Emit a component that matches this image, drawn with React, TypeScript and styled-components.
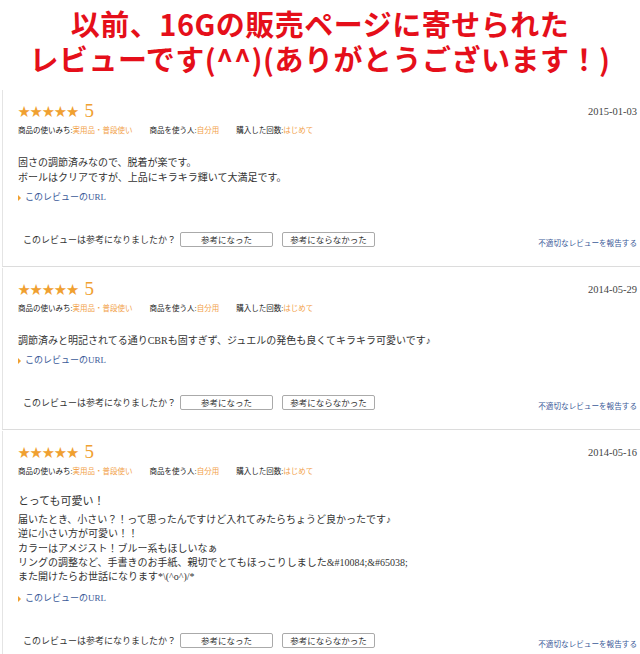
import React from "react";
import styled, { createGlobalStyle } from "styled-components";

const Global = createGlobalStyle`
  html, body { margin: 0; padding: 0; background: #fff; }
  body { font-family: "Liberation Serif", "Noto Sans CJK JP", serif; color: #333; }
`;

const Page = styled.div`
  width: 640px;
  display: flex;
  flex-direction: column;
`;

const Title = styled.h1`
  margin: 0;
  padding: 6px 0 14px;
  display: flex;
  flex-direction: column;
  align-items: center;
  font-family: "Noto Sans CJK JP", sans-serif;
  font-weight: 700;
  font-size: 29px;
  line-height: 35px;
  letter-spacing: 0.5px;
  color: #e50f1a;
`;

const TitleLine = styled.span`
  display: block;
  white-space: nowrap;
`;

const Card = styled.section`
  display: flex;
  flex-direction: column;
  margin-left: 2px;
  margin-bottom: 1px;
  padding: 12px 3px 0 15px;
  border-left: 1px solid #e4e4e4;
  border-bottom: 1px solid #dcdcdc;
`;

const Header = styled.div`
  display: flex;
  align-items: center;
  justify-content: space-between;
  height: 18px;
`;

const Rating = styled.div`
  display: flex;
  align-items: center;
  gap: 6px;
  color: #f0a030;
`;

const Stars = styled.span`
  font-family: "Noto Sans CJK JP", sans-serif;
  font-size: 12.3px;
  letter-spacing: -0.2px;
  line-height: 18px;
`;

const Score = styled.span`
  font-family: "Liberation Serif", serif;
  font-size: 19px;
  line-height: 18px;
`;

const DateText = styled.span`
  font-size: 10.5px;
  color: #444;
`;

const Attrs = styled.div`
  display: flex;
  gap: 17px;
  margin-top: 6px;
  font-size: 7.5px;
  line-height: 10px;
  white-space: nowrap;
`;

const Attr = styled.span`
  color: #222;
  font-weight: 400;
`;

const AttrValue = styled.span`
  color: #f2a24a;
`;

const Headline = styled.div`
  margin-top: 16px;
  font-size: 11px;
  line-height: 16px;
  color: #333;
`;

const Body = styled.div<{ $gap: number; $lh: number }>`
  margin-top: ${(p) => p.$gap}px;
  font-size: 10px;
  line-height: ${(p) => p.$lh}px;
  color: #333;
  white-space: nowrap;
`;

const UrlLink = styled.a<{ $gap: number }>`
  display: flex;
  align-items: center;
  gap: 4px;
  margin-top: ${(p) => p.$gap}px;
  font-size: 9px;
  line-height: 15px;
  color: #3b5a98;
  text-decoration: none;
`;

const Tri = styled.span`
  width: 0;
  height: 0;
  border-top: 3px solid transparent;
  border-bottom: 3px solid transparent;
  border-left: 3px solid #f0a030;
`;

const HelpRow = styled.div`
  display: flex;
  align-items: center;
  justify-content: space-between;
  margin-top: 26px;
  padding-left: 5px;
  height: 16px;
  margin-bottom: 19px;
`;

const HelpLeft = styled.div`
  display: flex;
  align-items: center;
  gap: 4px;
  font-size: 9px;
  color: #333;
`;

const Btn = styled.button`
  width: 93px;
  height: 15px;
  margin-right: 5px;
  padding: 0;
  border: 1px solid #aaa;
  border-radius: 2px;
  background: #fff;
  font-family: "Liberation Serif", "Noto Sans CJK JP", serif;
  font-size: 8.5px;
  color: #333;
`;

const Report = styled.a`
  margin-top: 6px;
  font-size: 7.6px;
  color: #3b5a98;
  text-decoration: none;
`;

type Review = {
  date: string;
  headline?: string;
  lines: string[];
};

const reviews: Review[] = [
  {
    date: "2015-01-03",
    lines: [
      "固さの調節済みなので、脱着が楽です。",
      "ボールはクリアですが、上品にキラキラ輝いて大満足です。",
    ],
  },
  {
    date: "2014-05-29",
    lines: ["調節済みと明記されてる通りCBRも固すぎず、ジュエルの発色も良くてキラキラ可愛いです♪"],
  },
  {
    date: "2014-05-16",
    headline: "とっても可愛い！",
    lines: [
      "届いたとき、小さい？！って思ったんですけど入れてみたらちょうど良かったです♪",
      "逆に小さい方が可愛い！！",
      "カラーはアメジスト！ブルー系もほしいなぁ",
      "リングの調整など、手書きのお手紙、親切でとてもほっこりしました&#10084;&#65038;",
      "また開けたらお世話になります*\\(^o^)/*",
    ],
  },
];

function ReviewCard({ r }: { r: Review }) {
  return (
    <Card>
      <Header>
        <Rating>
          <Stars>★★★★★</Stars>
          <Score>5</Score>
        </Rating>
        <DateText>{r.date}</DateText>
      </Header>
      <Attrs>
        <Attr>
          商品の使いみち:<AttrValue>実用品・普段使い</AttrValue>
        </Attr>
        <Attr>
          商品を使う人:<AttrValue>自分用</AttrValue>
        </Attr>
        <Attr>
          購入した回数:<AttrValue>はじめて</AttrValue>
        </Attr>
      </Attrs>
      {r.headline && <Headline>{r.headline}</Headline>}
      <Body $gap={r.headline ? 4 : 19} $lh={r.headline ? 14.3 : 15}>
        {r.lines.map((l, i) => (
          <div key={i}>{l}</div>
        ))}
      </Body>
      <UrlLink href="#" $gap={r.headline ? 7 : 5}>
        <Tri />
        このレビューのURL
      </UrlLink>
      <HelpRow>
        <HelpLeft>
          このレビューは参考になりましたか？
          <Btn>参考になった</Btn>
          <Btn>参考にならなかった</Btn>
        </HelpLeft>
        <Report href="#">不適切なレビューを報告する</Report>
      </HelpRow>
    </Card>
  );
}

export default function App() {
  return (
    <Page>
      <Global />
      <Title>
        <TitleLine>以前、16Gの販売ページに寄せられた</TitleLine>
        <TitleLine>レビューです(^^)(ありがとうございます！)</TitleLine>
      </Title>
      {reviews.map((r) => (
        <ReviewCard key={r.date} r={r} />
      ))}
    </Page>
  );
}
